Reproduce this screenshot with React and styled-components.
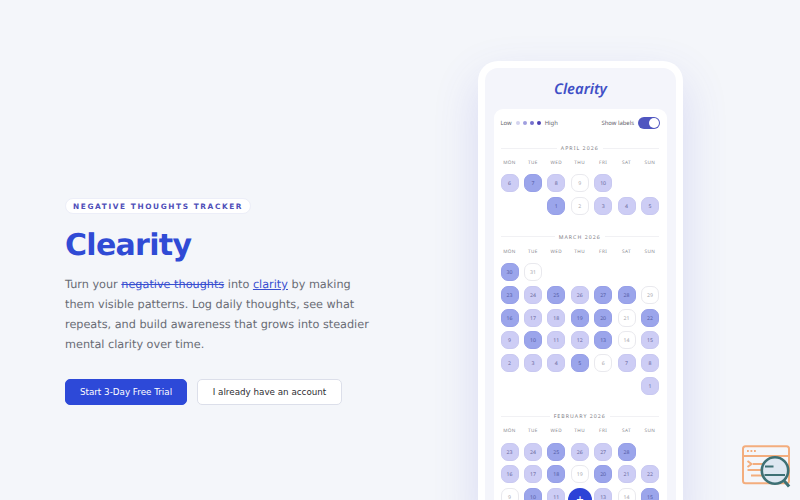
import React from "react";
import styled, { createGlobalStyle } from "styled-components";

const WEEKDAYS = ["MON", "TUE", "WED", "THU", "FRI", "SAT", "SUN"];

// every day is [number, level], level 0 = nothing logged, null = blank cell
const MONTHS = [
    {
        name: "APRIL 2026",
        days: [
            [6, 1], [7, 2], [8, 1], [9, 0], [10, 1], null, null,
            null, null, [1, 2], [2, 0], [3, 1], [4, 1], [5, 1],
        ],
    },
    {
        name: "MARCH 2026",
        days: [
            [30, 2], [31, 0], null, null, null, null, null,
            [23, 2], [24, 1], [25, 2], [26, 1], [27, 2], [28, 2], [29, 0],
            [16, 2], [17, 1], [18, 1], [19, 2], [20, 2], [21, 0], [22, 2],
            [9, 1], [10, 2], [11, 1], [12, 1], [13, 2], [14, 0], [15, 1],
            [2, 1], [3, 1], [4, 1], [5, 2], [6, 0], [7, 1], [8, 1],
            null, null, null, null, null, null, [1, 1],
        ],
    },
    {
        name: "FEBRUARY 2026",
        days: [
            [23, 1], [24, 1], [25, 2], [26, 1], [27, 1], [28, 2], null,
            [16, 1], [17, 1], [18, 2], [19, 0], [20, 2], [21, 1], [22, 1],
            [9, 0], [10, 2], [11, 1], [12, 1], [13, 1], [14, 0], [15, 2],
        ],
    },
];

const Calendar = ({name, days}) => {
    return (
        <Month>
            <MonthTitle>{name}</MonthTitle>
            <Weekdays>
                {WEEKDAYS.map((day) => <Weekday key={day}>{day}</Weekday>)}
            </Weekdays>
            <Days>
                {days.map((day, i) => day
                    ? <Day key={i} $level={day[1]}>{day[0]}</Day>
                    : <span key={i} />
                )}
            </Days>
        </Month>
    );
};

const InspectIcon = () => (
    <InspectSvg viewBox="0 0 50 44" fill="none">
        <g stroke="#f3ad7d" strokeWidth="2">
            <rect x="2" y="2.3" width="46" height="37" rx="2.5" />
            <path d="M2 12H48M6.500 17l4 3-4 3M12 20h11M6.500 26h15M10 31.500h14" />
            <path d="M6 7h1.800M9.500 7h1.800M13 7h1.800" />
        </g>
        <circle cx="34" cy="26.500" r="13.200" fill="#dde7f1" stroke="#3d7074" strokeWidth="2.600" />
        <path d="M24 22.500h8.500M23.500 31h20.500" stroke="#3d7074" strokeWidth="2" />
        <path d="M43.300 37l4.800 5.500" stroke="#3d7074" strokeWidth="3" />
    </InspectSvg>
);

const App = () => {
    return (
        <Page>
            <GlobalStyle />
            <Intro>
                <Badge>NEGATIVE THOUGHTS TRACKER</Badge>
                <Title>Clearity</Title>
                <Text>
                    Turn your <Struck>negative thoughts</Struck> into <Underlined>clarity</Underlined> by making
                    them visible patterns. Log daily thoughts, see what repeats, and build awareness
                    that grows into steadier mental clarity over time.
                </Text>
                <Buttons>
                    <PrimaryButton>Start 3-Day Free Trial</PrimaryButton>
                    <SecondaryButton>I already have an account</SecondaryButton>
                </Buttons>
            </Intro>
            <Phone>
                <Logo>Clearity</Logo>
                <Card>
                    <Toolbar>
                        <Legend>
                            Low
                            <Dots>
                                <Dot $color="#d3d3ee" />
                                <Dot $color="#a09fdf" />
                                <Dot $color="#746fcd" />
                                <Dot $color="#4d42b4" />
                            </Dots>
                            High
                        </Legend>
                        <ToggleLabel>
                            Show labels
                            <Toggle><Knob /></Toggle>
                        </ToggleLabel>
                    </Toolbar>
                    {MONTHS.map((month) => <Calendar key={month.name} {...month} />)}
                </Card>
                <AddButton>+</AddButton>
            </Phone>
            <InspectIcon />
        </Page>
    );
};

const GlobalStyle = createGlobalStyle`
  * {
    box-sizing: border-box;
  }
  body {
    margin: 0;
    background: #f4f6fa;
    text-rendering: geometricPrecision;
  }
`

const Page = styled.div`
  position: relative;
  display: flex;
  justify-content: space-between;
  height: 500px;
  padding: 61px 117.5px 0 65px;
  overflow: hidden;
  font-family: "DejaVu Sans", sans-serif;
`

const Intro = styled.div`
  width: 310px;
  padding-top: 137px;
`

const Badge = styled.div`
  display: flex;
  align-items: center;
  width: 186px;
  height: 16px;
  padding-left: 7px;
  border: 1px solid #eceef8;
  border-radius: 8px;
  background: #fff;
  color: #504fb9;
  font-size: 7.4px;
  font-weight: bold;
  letter-spacing: 1.58px;
  white-space: nowrap;
`

const Title = styled.h1`
  margin: 14px 0 0;
  color: #304bd5;
  font-size: 30px;
  font-weight: bold;
  line-height: 36px;
  letter-spacing: -0.7px;
`

const Text = styled.p`
  margin: 11px 0 0;
  color: #696c75;
  font-size: 11.26px;
  line-height: 20px;
`

const Struck = styled.span`
  color: #394fd0;
  text-decoration: line-through;
`

const Underlined = styled.span`
  color: #394fd0;
  text-decoration: underline;
`

const Buttons = styled.div`
  display: flex;
  gap: 10px;
  margin-top: 24px;
`

const Button = styled.button`
  height: 26px;
  padding: 0 0 1px;
  border-radius: 5px;
  font-family: inherit;
  font-size: 8.75px;
  white-space: nowrap;
`

const PrimaryButton = styled(Button)`
  width: 122px;
  border: 1px solid #2d49d8;
  background: #2d49d8;
  color: #fff;
`

const SecondaryButton = styled(Button)`
  width: 145px;
  border: 1px solid #dcdfea;
  background: #fff;
  color: #2d2e33;
`

const Phone = styled.div`
  position: relative;
  flex: none;
  width: 205px;
  height: 460px;
  padding: 0 9px;
  border: 7px solid #fff;
  border-bottom: none;
  border-radius: 20px 20px 0 0;
  background: #f4f5fb;
  box-shadow: 0 18px 45px rgba(80, 80, 210, 0.17);
  font-family: "Noto Sans", sans-serif;
`

const Logo = styled.div`
  height: 41px;
  padding: 11px 0 0 1px;
  color: #404fc6;
  font-size: 14.8px;
  font-style: italic;
  font-weight: 600;
  line-height: 20px;
  text-align: center;
`

const Card = styled.div`
  height: 420px;
  padding: 7px 7.5px 0 7px;
  border-radius: 9px 9px 0 0;
  background: #fff;
`

const Toolbar = styled.div`
  display: flex;
  justify-content: space-between;
  height: 14px;
  margin: 0 -1px 13px 0;
  color: #63636b;
  font-size: 5.9px;
`

const Legend = styled.div`
  display: flex;
  align-items: center;
  gap: 4px;
`

const Dots = styled.div`
  display: flex;
  gap: 3px;
`

const Dot = styled.span`
  width: 4px;
  height: 4px;
  border-radius: 50%;
  background: ${({$color}) => $color};
`

const ToggleLabel = styled.div`
  display: flex;
  align-items: center;
  gap: 4px;
`

const Toggle = styled.div`
  display: flex;
  align-items: center;
  justify-content: flex-end;
  width: 22px;
  height: 12px;
  padding-right: 1.5px;
  border-radius: 6px;
  background: #5056c0;
`

const Knob = styled.div`
  width: 10px;
  height: 10px;
  border-radius: 50%;
  background: #fff;
`

const Month = styled.div`
  margin-bottom: 16.3px;
`

const MonthTitle = styled.div`
  display: flex;
  align-items: center;
  gap: 4px;
  height: 10px;
  color: #7b7b83;
  font-size: 5.2px;
  letter-spacing: 1.05px;
  white-space: nowrap;

  &::before,
  &::after {
    content: "";
    flex: 1;
    height: 1px;
    background: #f1f1f4;
  }
`

const Weekdays = styled.div`
  display: grid;
  grid-template-columns: repeat(7, 18px);
  justify-content: space-between;
  margin-top: 6.4px;
`

const Weekday = styled.span`
  height: 8px;
  color: #85858d;
  font-size: 4.7px;
  letter-spacing: 0.4px;
  line-height: 8px;
  text-align: center;
`

const Days = styled.div`
  display: grid;
  grid-template-columns: repeat(7, 18px);
  grid-auto-rows: 18px;
  justify-content: space-between;
  row-gap: 4.75px;
  margin-top: 7.1px;
`

const Day = styled.div`
  display: flex;
  align-items: center;
  justify-content: center;
  border: 1px solid ${({$level}) => ["#e9e9ee", "#c8c8f1", "#969fe8"][$level]};
  border-radius: 7px;
  background: ${({$level}) => ["#fff", "#cdcdf5", "#9ba5eb"][$level]};
  color: ${({$level}) => ["#a5a5ab", "#66669b", "#5159a3"][$level]};
  font-size: 5.2px;
`

const AddButton = styled.div`
  position: absolute;
  top: 419.5px;
  left: 83.5px;
  display: flex;
  align-items: center;
  justify-content: center;
  width: 24px;
  height: 24px;
  border-radius: 50%;
  background: #2d43d7;
  color: #fff;
  font-size: 13px;
  line-height: 1;
`

const InspectSvg = styled.svg`
  position: absolute;
  top: 444px;
  left: 741px;
  width: 50px;
  height: 44px;
`

export default App;
